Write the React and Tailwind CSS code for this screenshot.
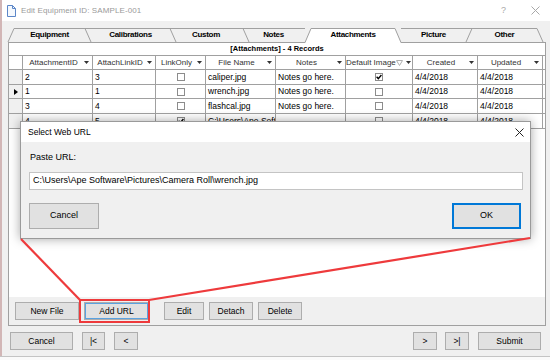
import React from "react";

const cols = [
  { name: "AttachmentID", w: "w-[70px]" },
  { name: "AttachLinkID", w: "w-[63px]" },
  { name: "LinkOnly", w: "w-[50px]" },
  { name: "File Name", w: "w-[70px]" },
  { name: "Notes", w: "w-[70px]" },
  { name: "Default Image", w: "w-[67px]", filter: true },
  { name: "Created", w: "w-[65px]" },
  { name: "Updated", w: "w-[65px]" },
];

const rows = [
  { id: "2", link: "3", only: false, file: "caliper.jpg", notes: "Notes go here.", def: true, h: "h-[15px]" },
  { id: "1", link: "1", only: false, file: "wrench.jpg", notes: "Notes go here.", def: false, h: "h-[14px]", current: true },
  { id: "3", link: "4", only: false, file: "flashcal.jpg", notes: "Notes go here.", def: false, h: "h-[15px]" },
  { id: "4", link: "5", only: true, file: "C:\\Users\\Ape Software\\Pictures\\Camera Roll\\wrench.jpg", notes: "", def: false, h: "h-[15px]" },
];

const tabs = [
  { label: "Equipment", w: "w-[77px]" },
  { label: "Calibrations", w: "w-[85px]" },
  { label: "Custom", w: "w-[66px]" },
  { label: "Notes", w: "w-[69px]" },
  { label: "Attachments", w: "w-[90px]" },
  { label: "Picture", w: "w-[71px]" },
  { label: "Other", w: "w-[71px]" },
];

function Arrow() {
  return (
    <svg width="5" height="3" viewBox="0 0 5 3" className="shrink-0">
      <path d="M0 0H5L2.5 3Z" fill="#333" />
    </svg>
  );
}

function Check({ checked }) {
  return (
    <span className="w-[8px] h-[8px] border border-[#8c8c8c] bg-white flex items-center justify-center">
      {checked && (
        <svg width="6" height="6" viewBox="0 0 6 6">
          <path d="M0.6 2.8 L2.3 4.6 L5.4 1" stroke="#000" strokeWidth="1.4" fill="none" />
        </svg>
      )}
    </span>
  );
}

function Btn({ children, className = "" }) {
  return (
    <button className={`h-[18px] bg-[#e1e1e1] border border-[#adadad] text-[8.5px] text-black leading-none ${className}`}>
      {children}
    </button>
  );
}

function Cell({ w, children, center }) {
  return (
    <div
      className={`${w} shrink-0 border-r border-[#a0a0a0] overflow-hidden whitespace-nowrap flex items-center ${
        center ? "justify-center" : "pl-[2px]"
      }`}
    >
      {children}
    </div>
  );
}

export default function App() {
  return (
    <div className="relative w-[550px] h-[360px] overflow-hidden bg-[#f0f0f0] font-['Liberation_Sans',Arial,sans-serif] text-black">
      {/* title bar */}
      <div className="h-[21px] bg-white flex items-center pl-[7px]">
        <svg width="9" height="12" viewBox="0 0 9 12">
          <path d="M0.5 0.5H5.5L8.5 3.5V11.5H0.5Z" fill="#f4f8fd" stroke="#5b86c8" />
          <path d="M5.5 0.5V3.5H8.5" fill="none" stroke="#5b86c8" />
        </svg>
        <span className="ml-[5px] text-[8px] text-[#9a9a9a] tracking-[0.1px]">Edit Equipment ID: SAMPLE-001</span>
        <span className="ml-auto text-[9px] text-[#a8a8a8]">?</span>
        <svg width="9" height="9" viewBox="0 0 9 9" className="ml-[25px] mr-[10px]">
          <path d="M0.5 0.5L8.5 8.5M8.5 0.5L0.5 8.5" stroke="#a8a8a8" strokeWidth="1" />
        </svg>
      </div>

      {/* tab strip */}
      <div className="relative h-[14px] mt-[7px]">
        <svg width="550" height="15" viewBox="0 0 550 15" className="absolute left-0 top-0 overflow-visible">
          <path d="M8 14 L14 0.5 H305" fill="none" stroke="#a0a0a0" />
          <path d="M85 0.5 L91 14 M170 0.5 L176 14 M243 0.5 L249 14" fill="none" stroke="#a0a0a0" />
          <path d="M401 0.5 H537 L543 14 M466 14 L472 0.5" fill="none" stroke="#a0a0a0" />
          <path d="M305 15 L311 0.5 H395 L401 15 Z" fill="#ffffff" stroke="none" />
          <path d="M305 14.5 L311 0.5 H395 L401 14.5" fill="none" stroke="#a0a0a0" />
        </svg>
        <div className="absolute inset-0 flex items-center pl-[11px]">
          {tabs.map((t) => (
            <div key={t.label} className={`${t.w} shrink-0 text-center text-[8px] font-bold tracking-[-0.3px]`}>
              {t.label}
            </div>
          ))}
        </div>
      </div>

      {/* tab page */}
      <div className="ml-[8px] w-[538px] h-[284px] border border-[#a0a0a0] bg-white flex flex-col">
        <div className="h-[12px] shrink-0 flex items-center justify-center text-[7.5px] font-bold">
          [Attachments] - 4 Records
        </div>
        <div className="h-[15px] shrink-0 flex border-y border-[#a0a0a0] text-[8px] text-[#333]">
          <div className="w-[14px] shrink-0 border-r border-[#a0a0a0]" />
          {cols.map((c) => (
            <div key={c.name} className={`${c.w} shrink-0 border-r border-[#a0a0a0] flex items-center pr-[3px]`}>
              <span className="flex-1 text-center whitespace-nowrap">{c.name}</span>
              {c.filter && (
                <svg width="7" height="6" viewBox="0 0 7 6" className="mr-[3px] shrink-0">
                  <path d="M0.5 0.5H6.5L3.5 5.5Z" stroke="#b0b0b0" fill="none" />
                </svg>
              )}
              <Arrow />
            </div>
          ))}
        </div>
        {rows.map((r) => (
          <div key={r.id} className={`${r.h} shrink-0 flex border-b border-[#a0a0a0] text-[8.5px]`}>
            <div className="w-[14px] shrink-0 border-r border-[#a0a0a0] bg-[#f0f0f0] flex items-center justify-center">
              {r.current && (
                <svg width="4" height="6" viewBox="0 0 4 6">
                  <path d="M0 0L4 3L0 6Z" fill="#000" />
                </svg>
              )}
            </div>
            <Cell w="w-[70px]">{r.id}</Cell>
            <Cell w="w-[63px]">{r.link}</Cell>
            <Cell w="w-[50px]" center>
              <Check checked={r.only} />
            </Cell>
            <Cell w="w-[70px]">{r.file}</Cell>
            <Cell w="w-[70px]">{r.notes}</Cell>
            <Cell w="w-[67px]" center>
              <Check checked={r.def} />
            </Cell>
            <Cell w="w-[65px]">4/4/2018</Cell>
            <Cell w="w-[65px]">4/4/2018</Cell>
          </div>
        ))}
        <div className="flex-1" />
        <div className="h-[28px] shrink-0 bg-[#f0f0f0] flex items-start pt-[5px] pl-[6px]">
          <Btn className="w-[64px]">New File</Btn>
          <Btn className="w-[65px] ml-[5px] border-[#0078d7] shadow-[inset_0_0_0_1px_#5aa2e0]">Add URL</Btn>
          <Btn className="w-[40px] ml-[15px]">Edit</Btn>
          <Btn className="w-[44px] ml-[5px]">Detach</Btn>
          <Btn className="w-[44px] ml-[5px]">Delete</Btn>
        </div>
      </div>

      {/* bottom buttons */}
      <div className="flex mt-[6px] pl-[10px] pr-[9px]">
        <Btn className="w-[63px]">Cancel</Btn>
        <Btn className="w-[23px] ml-[9px]">|&lt;</Btn>
        <Btn className="w-[24px] ml-[9px]">&lt;</Btn>
        <div className="flex-1" />
        <Btn className="w-[24px]">&gt;</Btn>
        <Btn className="w-[24px] ml-[8px]">&gt;|</Btn>
        <Btn className="w-[63px] ml-[9px]">Submit</Btn>
      </div>

      {/* window frame edges */}
      <div className="absolute left-0 top-0 bottom-0 w-[2px] bg-[#d2b6b6]" />
      <div className="absolute left-0 right-0 bottom-0 h-[4px] bg-[#fafafa] border-t border-[#c4c4c4]" />

      {/* dialog */}
      <div className="absolute left-[20px] top-[121px] w-[511px] h-[118px] border border-[#9a9a9a] bg-[#f0f0f0] shadow-[0_0_10px_rgba(0,0,0,0.35)] flex flex-col">
        <div className="h-[20px] bg-white flex items-center pl-[7px] pr-[6px]">
          <span className="text-[8.5px]">Select Web URL</span>
          <svg width="9" height="9" viewBox="0 0 9 9" className="ml-auto">
            <path d="M0.5 0.5L8.5 8.5M8.5 0.5L0.5 8.5" stroke="#222" strokeWidth="1" />
          </svg>
        </div>
        <div className="flex flex-col px-[8px] pt-[10px]">
          <div className="text-[9px] leading-[11px] pl-[1px]">Paste URL:</div>
          <div className="mt-[9px] h-[18px] w-[494px] bg-white border border-[#c4c4c4] flex items-center pl-[3px] text-[9px]">
            C:\Users\Ape Software\Pictures\Camera Roll\wrench.jpg
          </div>
          <div className="mt-[13px] flex">
            <button className="w-[70px] h-[26px] bg-[#e1e1e1] border border-[#adadad] text-[9px]">Cancel</button>
            <button className="w-[69px] h-[26px] ml-auto mr-[1px] bg-[#e1e1e1] border border-[#0078d7] shadow-[inset_0_0_0_1px_#0078d7] text-[9px]">
              OK
            </button>
          </div>
        </div>
      </div>

      {/* annotation */}
      <svg width="550" height="360" viewBox="0 0 550 360" className="absolute left-0 top-0 pointer-events-none">
        <path d="M21 239 L80 300" stroke="#ee3a3c" strokeWidth="2.2" fill="none" />
        <path d="M530 238 L149 300" stroke="#ee3a3c" strokeWidth="2.2" fill="none" />
        <rect x="80" y="300" width="69" height="22" stroke="#ee3a3c" strokeWidth="2" fill="none" />
      </svg>
    </div>
  );
}
